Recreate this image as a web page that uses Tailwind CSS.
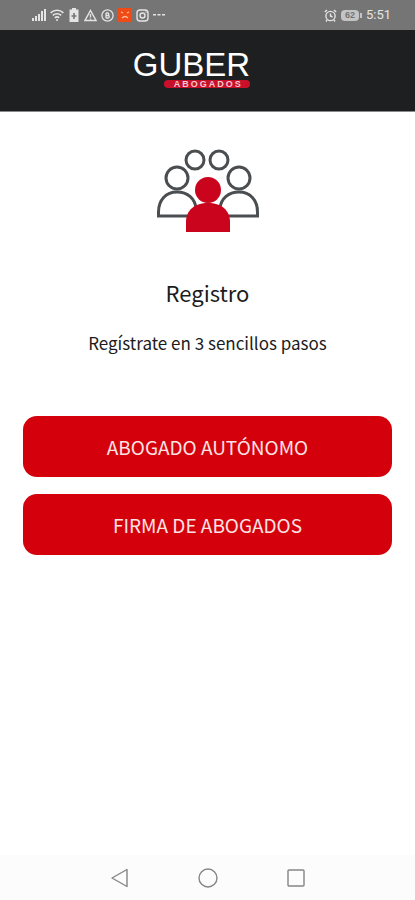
<!DOCTYPE html>
<html lang="es">
<head>
  <meta charset="UTF-8" />
  <meta name="viewport" content="width=device-width, initial-scale=1.0"/>
  <title>Registro - Guber Abogados</title>
  <script src="https://cdn.jsdelivr.net/npm/@tailwindcss/browser@4"></script>
</head>
<body class="bg-white text-[#1c1c1c] font-['Noto_Sans_CJK_SC',sans-serif] flex flex-col min-h-screen">

  <!-- Status bar -->
  <div class="bg-[#757575] text-[#e4e4e4] h-[30px] pl-8 pr-6 flex items-center justify-between">
    <div class="flex items-center gap-1">
      <svg class="w-[14px] h-[14px]" viewBox="0 0 14 14" fill="currentColor">
        <path d="M0 10h2v3H0zM3 8h2v5H3zM6 6h2v7H6zM9 3h2v10H9zM12 1h2v12h-2z" />
      </svg>
      <svg class="w-[14px] h-[14px]" viewBox="0 0 14 14" fill="none" stroke="currentColor" stroke-width="1.6">
        <path d="M.6 4.8a9.5 9.5 0 0 1 12.8 0M2.8 7.4a6.2 6.2 0 0 1 8.4 0M4.8 9.8a3.4 3.4 0 0 1 4.4 0" />
        <circle cx="7" cy="12" r="1" fill="currentColor" stroke="none" />
      </svg>
      <svg class="w-3 h-[14px]" viewBox="0 0 12 14">
        <path d="M4 0h4v1.5h2.500V14h-9V1.500H4z" fill="currentColor" />
        <path d="M6 5v6M3.500 8h5" stroke="#757575" stroke-width="1.6" />
      </svg>
      <svg class="w-[13px] h-[13px]" viewBox="0 0 13 13" fill="none" stroke="currentColor" stroke-width="1.4">
        <path d="M6.500 1.500 12 11.500H1zM6.500 5v3.500M6.500 9.500v1" />
      </svg>
      <svg class="w-[13px] h-[13px]" viewBox="0 0 13 13" fill="none" stroke="currentColor" stroke-width="1.3">
        <circle cx="6.500" cy="6.500" r="5.600" />
        <path d="M5 4v5M5 4h1.500a1.200 1.200 0 0 1 0 2.500H5h2a1.200 1.200 0 0 1 0 2.500H5" />
      </svg>
      <svg class="w-[14px] h-[14px]" viewBox="0 0 14 14">
        <rect width="14" height="14" rx="1" fill="#f04a16" />
        <path d="M3 4l2 1M11 4 9 5M4 10q3-3 6 0" fill="none" stroke="#ffc09c" stroke-width="1.2" />
      </svg>
      <svg class="w-[13px] h-[13px]" viewBox="0 0 13 13" fill="none" stroke="currentColor" stroke-width="1.4">
        <rect x="1" y="1" width="11" height="11" rx="3" />
        <circle cx="6.500" cy="6.500" r="2.500" />
        <path d="M9.500 3h1" />
      </svg>
      <svg class="w-3 h-3" viewBox="0 0 12 12" fill="currentColor">
        <path d="M0 5h3v1.500H0zM4.500 5h3v1.500h-3zM9 5h3v1.500H9z" />
      </svg>
    </div>
    <div class="flex items-center gap-1">
      <svg class="w-[13px] h-[13px]" viewBox="0 0 13 13" fill="none" stroke="currentColor" stroke-width="1.4">
        <circle cx="6.500" cy="7" r="4.600" />
        <path d="M6.500 4.500V7l2 1M.8 3 3 1M12.200 3 10 1M3 11l-1 1.500M10 11l1 1.500" />
      </svg>
      <div class="flex items-center">
        <span class="bg-[#c4c4c4] text-[#757575] rounded-sm w-[18px] h-[11px] text-[9px] leading-[11px] font-bold text-center font-['Liberation_Sans',sans-serif]">62</span>
        <span class="bg-[#c4c4c4] w-[2px] h-[5px] ml-px"></span>
      </div>
      <span class="text-[13px] leading-4 font-[Roboto,sans-serif]">5:51</span>
    </div>
  </div>

  <!-- Header -->
  <header class="bg-[#1d1f20] border-b border-[#8a8a8a] h-[82px] pt-5 flex justify-center">
    <div class="flex flex-col items-end mr-8 font-['Liberation_Sans',sans-serif]">
      <span class="text-white text-[33px] leading-[30px]">GUBER</span>
      <span class="bg-[#c8102a] text-[#f3c9ce] rounded-sm w-[86px] h-2 text-[9px] leading-2 font-bold tracking-[2px] text-center pl-[2px]">ABOGADOS</span>
    </div>
  </header>

  <!-- Content -->
  <main class="grow flex flex-col items-center px-[23px] pt-9">
    <svg class="w-[104px] h-[86px]" viewBox="0 0 104 86" fill="none" stroke="#4b4e50" stroke-width="3">
      <circle cx="39" cy="12" r="9" />
      <circle cx="63" cy="12" r="9" />
      <circle cx="21" cy="30" r="11" />
      <circle cx="83" cy="30" r="11" />
      <path d="M40 68H2.500V64C2.500 52 10 44 21 44s18 7 19 16M64 68h37.500V64c0-12-7.500-20-18.500-20S65 51 64 60" />
      <g fill="#c9041c" stroke="none">
        <circle cx="52" cy="42" r="13" />
        <path d="M30 84V74c0-12 9-19 22-19s22 7 22 19v10z" />
      </g>
    </svg>

    <h1 class="mt-[42px] text-[22px] leading-8">Registro</h1>
    <p class="mt-[21px] text-[17px] leading-7">Regístrate en 3 sencillos pasos</p>

    <div class="mt-[59px] w-full flex flex-col gap-[17px]">
      <button class="bg-[#d4000c] text-[#fbe3e3] text-[19px] leading-7 h-[61px] w-full rounded-[14px]">ABOGADO AUTÓNOMO</button>
      <button class="bg-[#d4000c] text-[#fbe3e3] text-[19px] leading-7 h-[61px] w-full rounded-[14px]">FIRMA DE ABOGADOS</button>
    </div>
  </main>

  <!-- Navigation bar -->
  <nav class="bg-[#fcfcfc] h-[45px] flex items-center justify-center gap-[68px] text-[#858585]">
    <button aria-label="Atrás">
      <svg class="w-5 h-5" viewBox="0 0 20 20" fill="none" stroke="currentColor" stroke-width="1.4" stroke-linejoin="round">
        <path d="M17 1.500v17L2 10z" />
      </svg>
    </button>
    <button aria-label="Inicio">
      <svg class="w-5 h-5" viewBox="0 0 20 20" fill="none" stroke="currentColor" stroke-width="1.4">
        <circle cx="10" cy="10" r="9" />
      </svg>
    </button>
    <button aria-label="Recientes">
      <svg class="w-5 h-5" viewBox="0 0 20 20" fill="none" stroke="currentColor" stroke-width="1.4">
        <rect x="2" y="2" width="16" height="16" rx="1" />
      </svg>
    </button>
  </nav>

</body>
</html>
